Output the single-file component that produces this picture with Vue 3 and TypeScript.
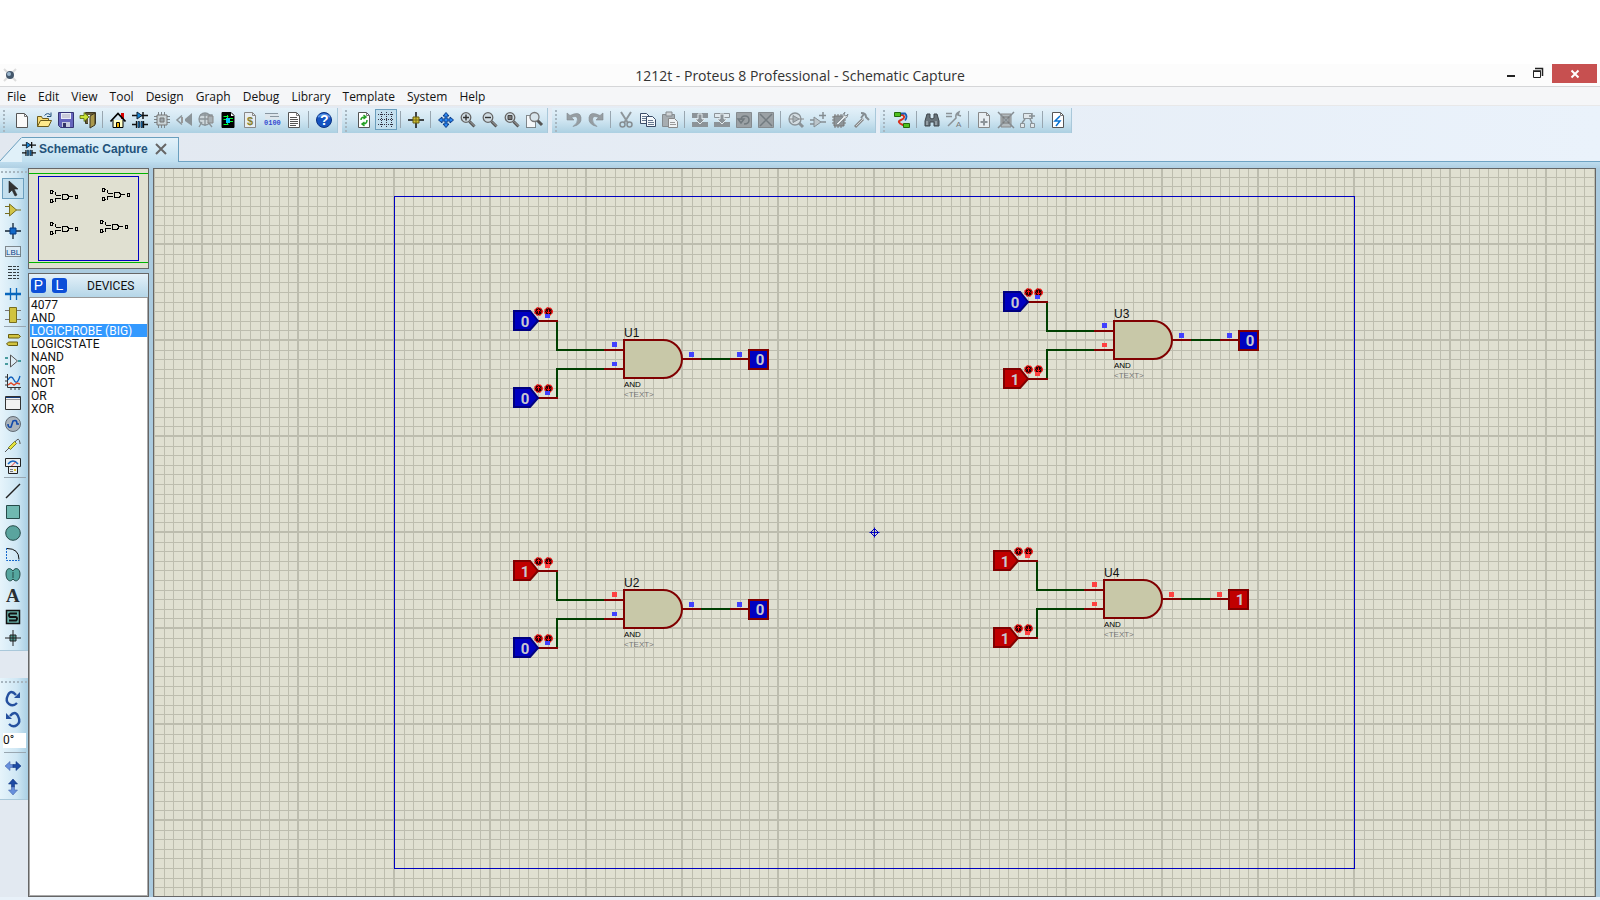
<script setup lang="ts">
import { ref } from 'vue'

type Level = 0 | 1
interface Tool { name: string; label: string; active?: boolean }
type Item = Tool | null
interface Gate { id: string; x: number; y: number; a: Level; b: Level; out: Level }

const menus = ['File', 'Edit', 'View', 'Tool', 'Design', 'Graph', 'Debug', 'Library', 'Template', 'System', 'Help']

const t = (name: string, label: string, active = false): Tool => ({ name, label, active })

const toolbars: Item[][] = [
  [t('new', 'New project'), t('open', 'Open project'), t('save', 'Save project'), t('exit', 'Close project'), null,
    t('home', 'Home page'), t('schematic', 'Schematic capture'), t('chip', 'PCB layout'), t('viewer', '3D visualizer'),
    t('gerber', 'Gerber viewer'), t('explorer', 'Design explorer'), t('bom', 'Bill of materials'), t('code', 'Source code'),
    t('notes', 'Project notes'), null, t('help', 'Help')],
  [t('refresh', 'Redraw display'), t('grid', 'Toggle grid', true), null, t('origin', 'Toggle false origin'), null,
    t('pan', 'Center at cursor'), t('zoomIn', 'Zoom in'), t('zoomOut', 'Zoom out'), t('zoomAll', 'Zoom to view entire sheet'), t('zoomArea', 'Zoom to area')],
  [t('undo', 'Undo'), t('redo', 'Redo'), null, t('cut', 'Cut'), t('copy', 'Copy'), t('paste', 'Paste'), null,
    t('blockCopy', 'Block copy'), t('blockMove', 'Block move'), t('blockRotate', 'Block rotate'), t('blockDelete', 'Block delete'), null,
    t('pick', 'Pick parts'), t('make', 'Make device'), t('package', 'Packaging tool'), t('decompose', 'Decompose')],
  [t('wire', 'Wire autorouter'), null, t('find', 'Search and tag'), t('assign', 'Property assignment tool'), null,
    t('addSheet', 'New sheet'), t('removeSheet', 'Remove sheet'), t('exitSheet', 'Exit to parent sheet'), null, t('erc', 'Electrical rule check')],
]

const modes: Item[] = [
  t('arrow', 'Selection mode', true), t('component', 'Component mode'), t('junction', 'Junction dot mode'), t('lbl', 'Wire label mode'),
  t('script', 'Text script mode'), t('bus', 'Buses mode'), t('sub', 'Subcircuit mode'), null,
  t('terminals', 'Terminals mode'), t('pins', 'Device pins mode'), t('graph', 'Graph mode'), t('popup', 'Active popup mode'),
  t('generator', 'Generator mode'), t('probe', 'Probe mode'), t('meter', 'Instruments mode'), null,
  t('line', '2D line'), t('box', '2D box'), t('circle', '2D circle'), t('arc', '2D arc'), t('path', '2D path'),
  t('text', '2D text'), t('symbol', '2D symbol'), t('marker', '2D marker'),
]

const doc = '<path d="M2.500 .5h8l3 3v12h-11z" fill="#fff" stroke="#555"/><path d="M10.500 .5v3h3" fill="none" stroke="#777"/>'
const greyDoc = '<path d="M2.500 .5h8l3 3v12h-11z" fill="#e8eef2" stroke="#888"/><path d="M10.500 .5v3h3" fill="none" stroke="#888"/>'
const lens = '<path d="M9.500 9.500l5 5" stroke="#555" stroke-width="3"/><path d="M10 9.500l4.500 4.500" stroke="#aaa"/><circle cx="6" cy="5.500" r="4.800" fill="#cfdbe2" stroke="#666" stroke-width="1.300"/>'
const parts = '<path d="M0 3.500h16M0 12.500h5M11 12.500h5" stroke="#111" stroke-width="1.300"/><path d="M5 0v7l5-3.500z" fill="#1686d9" stroke="#123"/><path d="M11 0v7" stroke="#111" stroke-width="1.500"/><path d="M4.500 9v7M11.500 9v7" stroke="#111" stroke-width="1.300"/><path d="M6 9.500h1.500v6H6zM9 9.500h1.500v6H9z" fill="#1686d9" stroke="#123" stroke-width=".8"/>'

const icons: Record<string, string> = {
  new: '<path d="M2.500 1.500h8l3 3v11h-11z" fill="#fafafa" stroke="#555"/><path d="M10.500 1.500v3h3" fill="none" stroke="#777"/>',
  open: '<path d="M1.500 14.500v-10h4l1 2h6v3" fill="#f7dc75" stroke="#6c5b1a"/><path d="M1.500 14.500l3-6h11l-3 6z" fill="#ffea8c" stroke="#6c5b1a"/><path d="M8.500 3.500q3-3.500 6-.5M15 .5v4h-4" fill="none" stroke="#24517c"/>',
  save: '<path d="M.5.5h15v15h-13l-2-2z" fill="#6565bd" stroke="#353575"/><path d="M3 1h10v6H3z" fill="#e9edf9"/><path d="M4 3h8M4 5h8" stroke="#aab"/><path d="M4 10h8v5H4z" fill="#c8cbe0"/><path d="M5 11h3v4H5z" fill="#333366"/>',
  exit: '<path d="M5.500 .5h10v11h-3v-8h-4v8h-3z" fill="#655b35" stroke="#3a3522"/><path d="M8 3h5v9H8z" fill="#e4ecf0"/><path d="M10 4l5-3v12l-5 3z" fill="#a9984c" stroke="#3a3522"/><path d="M0 3.500h4v-3l5 4.500-5 4.500v-3H0z" fill="#c9e438" stroke="#53670d" stroke-width=".8"/>',
  home: '<path d="M11 1h3v6h-3z" fill="#d80000"/><path d="M3 8v7.500h10V8" fill="#ffffc8" stroke="#000"/><path d="M.5 9.500L8 1.500l7.500 8" fill="none" stroke="#000" stroke-width="1.800"/><path d="M6.500 10.500h3v5h-3z" fill="#f8b800" stroke="#000"/>',
  schematic: parts,
  chip: '<path d="M4.500 0v16M7.500 0v16M10.500 0v16M0 4.500h16M0 7.500h16M0 10.500h16" stroke="#7d868b"/><path d="M3 3h10v10H3z" fill="#c9d4d8" stroke="#777"/><path d="M6 6h4v4H6z" fill="#9ba5aa" stroke="#777"/>',
  viewer: '<path d="M9 7l7-6v13l-7-5z" fill="#8b9499"/><path d="M6 3.500L1 8l5 4.500" fill="none" stroke="#8a9499" stroke-width="1.500"/><path d="M6 5v6" stroke="#999" stroke-width="2"/>',
  gerber: '<circle cx="7" cy="7" r="6" fill="#cdd6da" stroke="#8b9499" stroke-width="1.300"/><path d="M1 7h13M7 1v13M2 3h12v5M4 10l-3 5M10 10l4 5" fill="none" stroke="#8b9499" stroke-width="1.300"/><path d="M10 4h5v7h-5z" fill="#a8b0b4" stroke="#888"/>',
  explorer: '<path d="M2 .5h9l3 3v12H2z" fill="#000" stroke="#000"/><path d="M11 1v3h3z" fill="#fff"/><path d="M3.500 4.500h5M3.500 7.500h3M9 9.500h4M3.500 12.500h5M10 6.500h3M7.500 3v9" stroke="#00ff30"/><path d="M6 6h4v5H6z" fill="#00c8ff"/>',
  bom: greyDoc + '<text x="5" y="13" font-size="11" font-family="Liberation Sans" font-weight="bold" fill="#88812d">$</text>',
  code: '<path d="M1 1h14v6H1z" fill="#dde6ec"/><path d="M1 1.500h13M6 4.500h9" stroke="#8896a0"/><text x="0" y="13" font-size="7" font-family="Liberation Mono" font-weight="bold" fill="#354bd0">0100</text>',
  notes: doc + '<path d="M4 5.500h7M4 7.500h8M4 9.500h8M4 11.500h8M4 13.500h6" stroke="#555"/>',
  help: '<circle cx="8" cy="8" r="7.500" fill="#1553c0" stroke="#0a3282"/><path d="M2 5q6-5 12 0" fill="none" stroke="#5a93e4" stroke-width="2"/><text x="4" y="13" font-size="14" font-family="Liberation Sans" font-weight="bold" fill="#fff">?</text>',
  refresh: doc + '<path d="M5 8q0-3 4-3M7.500 3l2.500 2-2.500 2M11 8q0 4-4 4M8.500 14L6 12l2.500-2" fill="none" stroke="#25a125" stroke-width="1.500"/>',
  grid: '<path d="M0 2.500h16M0 7.500h16M0 12.500h16M3.500 0v16M8.500 0v16M13.500 0v16" stroke="#334" stroke-dasharray="1 1"/>',
  origin: '<path d="M8 0v16M0 8h16" stroke="#111" stroke-width="1.500"/><path d="M5 5h6v6H5z" fill="#d2c235" stroke="#675d10"/><path d="M8 5v6M5 8h6" stroke="#746a14"/>',
  pan: '<path d="M8 .5l3 3.500H9v3h3V5l3.500 3-3.500 3V9H9v3h2l-3 3.500L5 12h2V9H4v2L.5 8 4 5v2h3V4H5z" fill="#2b86f0" stroke="#0b3b86"/>',
  zoomIn: lens + '<path d="M3 5.500h6M6 2.500v6" stroke="#333" stroke-width="1.400"/>',
  zoomOut: lens + '<path d="M3 5.500h6" stroke="#333" stroke-width="1.400"/>',
  zoomAll: lens + '<path d="M4 3.500h4v4H4z" fill="#777" stroke="#444"/>',
  zoomArea: '<path d="M.5 3.500h9v12h-9z" fill="#f5f8fa" stroke="#222" stroke-dasharray="1 1"/><path d="M11 8l5 5" stroke="#555" stroke-width="3"/><circle cx="8.500" cy="5" r="4.500" fill="#d8e5ec" stroke="#777" stroke-width="1.300"/>',
  undo: '<path d="M1 1v7h7L5.500 5.500Q11 3 11.500 7T7 14.500q9-2 8-9T4 3.500z" fill="#969da2" stroke="#80888d" stroke-width=".6"/>',
  redo: '<path d="M15 1v7H8l2.500-2.500Q5 3 4.500 7T9 14.500q-9-2-8-9t11-2z" fill="#969da2" stroke="#80888d" stroke-width=".6"/>',
  cut: '<path d="M3 0l7 11M13 0L6 11" stroke="#8e969b" stroke-width="2"/><circle cx="4.500" cy="12.500" r="2.500" fill="none" stroke="#858d92" stroke-width="1.500"/><circle cx="11.500" cy="12.500" r="2.500" fill="none" stroke="#858d92" stroke-width="1.500"/>',
  copy: '<path d="M.5 1.500h6l3 3v7h-9z" fill="#f4f8fb" stroke="#3a4b66"/><path d="M6.500 4.500h6l3 3v7h-9z" fill="#f4f8fb" stroke="#3a4b66"/><path d="M2 4.500h4M2 6.500h4M2 8.500h4M8 8.500h5M8 10.500h6M8 12.500h6" stroke="#667890"/>',
  paste: '<path d="M.5 2.500h12v12H.5z" fill="#a7adb1" stroke="#858b8f"/><path d="M4 0h6v4H4z" fill="#d0d4d7" stroke="#858b8f"/><path d="M6.500 6.500h6l3 3v6h-9z" fill="#eef2f5" stroke="#888"/><path d="M8 10.500h5M8 12.500h6" stroke="#999"/>',
  blockCopy: '<path d="M0 1h16v5H0zM0 10h16v5H0z" fill="#8c9398"/><path d="M6 2h4v5h3l-5 5-5-5h3z" fill="#8c9398" stroke="#e2eaee"/>',
  blockMove: '<path d="M.5 1.500h15v4H.5z" fill="#e0e9ee" stroke="#8c9398"/><path d="M0 10h16v5H0z" fill="#8c9398"/><path d="M6 2h4v5h3l-5 5-5-5h3z" fill="#8c9398" stroke="#e2eaee"/>',
  blockRotate: '<path d="M.5.5h15v15H.5z" fill="#9ba1a5" stroke="#858b8f"/><path d="M5 8q0-4 4-4t4 4-5 4M2 7h6l-3 4z" fill="none" stroke="#727a7f" stroke-width="1.500"/>',
  blockDelete: '<path d="M.5.5h15v15H.5z" fill="#9ba1a5" stroke="#858b8f"/><path d="M2 2l12 12M14 2L2 14" stroke="#737b80" stroke-width="1.500"/>',
  pick: '<path d="M11 11l4 4" stroke="#8a9297" stroke-width="3"/><circle cx="7" cy="7" r="6" fill="#d4dde2" stroke="#8a9297" stroke-width="1.300"/><path d="M5 3.500v7L11 7z" fill="#a8b0b4" stroke="#858d92"/><path d="M1 7h4M11 7h5" stroke="#888"/>',
  make: '<path d="M4 5v10l7-5z" fill="#bcc5ca" stroke="#858d92"/><path d="M0 8h4M0 12h4M11 10h5M13 0v7M9 3.500h7" stroke="#858d92" stroke-width="1.500"/>',
  package: '<path d="M0 5h14M0 8h14M0 11h14M3 2v14M6 2v14M9 2v14" stroke="#777"/><path d="M2 4h10v10H2z" fill="#8d9498" stroke="#777"/><path d="M4 12l7-7q-1-3 2-5l-1 3 2 1 2-2q0 4-4 5l-6 6z" fill="#e5ebee" stroke="#858d92"/>',
  decompose: '<path d="M1 15l8-8" stroke="#888" stroke-width="3"/><path d="M2 14l8-8" stroke="#cdd4d8"/><path d="M7 1q5 0 5 4l3 3M10 2l-3 4" stroke="#858d92" stroke-width="2" fill="none"/>',
  wire: '<path d="M7 3h2q3 3-2 5t2 5h2" fill="none" stroke="#d8321f" stroke-width="2"/><path d="M7 1.500h4q3 3 0 7" fill="none" stroke="#1c5eb4" stroke-width="1.800"/><path d="M.5.500h6v4h-6zM9.500 11.500h6v4h-6z" fill="#50c020" stroke="#236a0c"/>',
  find: '<path d="M3 2h3v4l2 1 2-1V2h3l2 7v5h-5v-4H6v4H1V9z" fill="#68737a" stroke="#3e474d"/><path d="M3 9v4M12 9v4" stroke="#bdc8ce"/>',
  assign: '<path d="M0 1.500h6M0 4.500h6M2 14l8-8q-1-4 3-6l-1 3 3 1" fill="none" stroke="#8a9297" stroke-width="1.500"/><text x="10" y="15" font-size="8" font-family="Liberation Sans" fill="#777">A</text>',
  addSheet: greyDoc + '<path d="M4.500 10h7M8 6.500v7" stroke="#8d9499" stroke-width="2"/>',
  removeSheet: '<path d="M3 2h10v13H3z" fill="#b2babe" stroke="#888"/><path d="M0 0l16 16M16 0L0 16" stroke="#858d92" stroke-width="1.500"/><path d="M5 5h6v6H5z" fill="none" stroke="#777"/>',
  exitSheet: '<path d="M3.500 1.500h8v5h-8zM.5 11.500h4v4h-4zM10.500 11.500h4v4h-4z" fill="#e0e7eb" stroke="#8a9297"/><path d="M5 7l-3 4M10 7l2 4M9 4h6M12 1v6" fill="none" stroke="#8a9297" stroke-width="1.500"/>',
  erc: doc + '<path d="M10 4L5 9h5l-4 5" fill="none" stroke="#0871d0" stroke-width="1.500"/>',
  arrow: '<path d="M4 0v12l3-3 3 6 2-1-3-6h4z" fill="#333" stroke="#222" stroke-width=".6"/>',
  component: '<path d="M0 4.500h5M0 11.500h5M11 8h5" stroke="#776e20"/><path d="M4.500 2v12l7-6z" fill="#d2c548" stroke="#776e20"/>',
  junction: '<path d="M8 0v16M0 8h16" stroke="#123" stroke-width="1.300"/><path d="M5 5h6v6H5z" fill="#1269c8" stroke="#053b83"/>',
  lbl: '<path d="M.5 2.500h15v10H.5z" fill="#dbeaf4" stroke="#222" stroke-dasharray="1 1"/><text x="1" y="11" font-size="8" font-family="Liberation Sans" fill="#08428b">LBL</text>',
  script: '<path d="M3 1.500h11M3 4.500h11M3 7.500h11M3 10.500h11M3 13.500h11" stroke="#343c40" stroke-dasharray="4 1 3 1"/>',
  bus: '<path d="M0 8h16" stroke="#0967bd" stroke-width="2.500"/><path d="M5.500 2v12M11.500 2v12" stroke="#0967bd" stroke-width="1.300"/>',
  sub: '<path d="M0 3.500h4M0 12.500h4M12 3.500h4M12 12.500h4" stroke="#777"/><path d="M4.500.5h7v15h-7z" fill="#d1c340" stroke="#776e20"/>',
  terminals: '<path d="M3.500 2.500h10l2 2-2 1.500h-10z" fill="#d1c340" stroke="#675d10"/><path d="M12.500 10h-9l-2 2 2 1.500h9z" fill="#d1c340" stroke="#675d10"/>',
  pins: '<path d="M5.500 2v12l7-6z" fill="#dcebf3" stroke="#555"/><path d="M0 5h3M0 11h3M13 8h3" stroke="#168080" stroke-width="1.500"/>',
  graph: '<path d="M2.500 0v13.500H16M0 3h3M0 7h3M0 11h3M6 13v3M10 13v3M14 13v3" fill="none" stroke="#333"/><path d="M3 6q3-6 6 0t6-4" fill="none" stroke="#1261bd" stroke-width="1.300"/><path d="M3 11l3-2 3 2 3-2 3 1" fill="none" stroke="#e04a29" stroke-width="1.500"/>',
  popup: '<path d="M.5 1.500h15v13H.5z" fill="#f2f2f2" stroke="#333"/><path d="M1 2.500h14" stroke="#143b78"/><path d="M1 4.500h14" stroke="#999"/>',
  generator: '<circle cx="8" cy="8" r="7.500" fill="#aab3bb" stroke="#626b74"/><path d="M3 8q0 4 3 3l2-6q4-2 4 3h2" fill="none" stroke="#124aab" stroke-width="1.600"/>',
  probe: '<path d="M0 15l4-4M10 5q4-6 5 1v1" fill="none" stroke="#555"/><path d="M3.500 10.500l6-6 2 2-6 6z" fill="#e4e33c" stroke="#666813" stroke-width=".8"/>',
  meter: '<path d="M.5.5h15v8H.5zM3.500 8.500h9v7h-9z" fill="#e8edef" stroke="#222"/><path d="M3 6q5-6 10 0" fill="none" stroke="#1267c2" stroke-width="1.500"/><path d="M6.500 8l4-4" stroke="#d33"/><path d="M5 11.500h3M5 13.500h3" stroke="#777"/><path d="M9 11h2v2H9z" fill="#e0c82c"/>',
  line: '<path d="M1 15L15 1" stroke="#222" stroke-width="1.500"/>',
  box: '<path d="M1.500 1.500h13v13h-13z" fill="#70b9b1" stroke="#264b49"/>',
  circle: '<circle cx="8" cy="8" r="7.300" fill="#5aa49e" stroke="#264b49"/>',
  arc: '<path d="M1.500 2v12.500h13" fill="none" stroke="#1768cb" stroke-dasharray="2 1"/><path d="M2 2.500q12 0 12 11" fill="none" stroke="#111"/>',
  path: '<path d="M8 4c2-4 7-3 7 3s-4 9-7 5c-3 4-7 1-7-5S5 0 8 4z" fill="#55a69f" stroke="#264b49"/><path d="M8 5v6" stroke="#264b49"/>',
  text: '<text x="1" y="14" font-size="19" font-family="Liberation Serif" font-weight="bold" fill="#292e32">A</text>',
  symbol: '<path d="M1.500 1.500h13v13h-13z" fill="#69b0a8" stroke="#111" stroke-width="1.500"/><path d="M12 4.500H5q-1 0-1 1.500t1 2h6q1 0 1 1.500t-1 2H4" fill="none" stroke="#111" stroke-width="2"/>',
  marker: '<path d="M8 0v16M0 8h16" stroke="#222"/><path d="M5 5h6v6H5z" fill="#50988f" stroke="#222"/><path d="M8 5v6M5 8h6" stroke="#222"/>',
  cw: '<path d="M12 12q-4 4-8 1T3 4t8 0" fill="none" stroke="#24509f" stroke-width="2.400"/><path d="M15 1v6H9z" fill="#24509f"/>',
  ccw: '<path d="M4 12q4 4 8 1t1-9-8 0" fill="none" stroke="#24509f" stroke-width="2.400"/><path d="M1 1v6h6z" fill="#24509f"/>',
  mirrorX: '<path d="M0 8l5-4.500v3h3v3H5v3z" fill="#678fdc" stroke="#4969ad" stroke-width=".6"/><path d="M16 8l-5-4.500v3H8v3h3v3z" fill="#1d4ba4" stroke="#12387f" stroke-width=".6"/>',
  mirrorY: '<path d="M8 0L3.500 5h3v3h3V5h3z" fill="#1d4ba4" stroke="#12387f" stroke-width=".6"/><path d="M8 16l-4.500-5h3V8h3v3h3z" fill="#678fdc" stroke="#4969ad" stroke-width=".6"/>',
}

const devices = ['4077', 'AND', 'LOGICPROBE (BIG)', 'LOGICSTATE', 'NAND', 'NOR', 'NOT', 'OR', 'XOR']
const selected = ref('LOGICPROBE (BIG)')
const angle = ref('0°')

const gates: Gate[] = [
  { id: 'U1', x: 470, y: 171, a: 0, b: 0, out: 0 },
  { id: 'U3', x: 960, y: 152, a: 0, b: 1, out: 0 },
  { id: 'U2', x: 470, y: 421, a: 1, b: 0, out: 0 },
  { id: 'U4', x: 950, y: 411, a: 1, b: 1, out: 1 },
]
const thumbs = [[21, 21], [73, 19], [21, 53], [71, 51]]

const fill = (v: Level) => (v ? '#c00000' : '#0000c0')
const edge = (v: Level) => (v ? '#800000' : '#000080')
const dot = (v: Level) => (v ? '#ff4040' : '#4040ff')

// Grid of ten small steps per large step; every tenth line is two pixels wide.
function gridPath(): string {
  let d = ''
  for (let i = -7; i < 400; i++) {
    const w = i % 10 === 0 ? 2 : 1
    const x = Math.round(48 + i * 9.6) - w + 1
    const y = Math.round(75 + i * 9.6) - w + 1
    if (x >= 0) d += `M${x} 0h${w}v2400h-${w}z`
    if (y >= 0) d += `M0 ${y}h4000v${w}h-4000z`
  }
  return d
}
const grid = gridPath()
</script>

<template>
  <div class="app">
    <header class="titlebar">
      <svg class="logo" width="14" height="14" viewBox="0 0 14 14" aria-hidden="true">
        <path d="M1 1l3 3M13 1l-3 3M1 13l3-3M13 13l-3-3" stroke="#ddd" stroke-width="2" />
        <circle cx="7" cy="7" r="4" fill="#44576b" /><circle cx="6" cy="6" r="2" fill="#9cb8cf" />
      </svg>
      <h1>1212t - Proteus 8 Professional - Schematic Capture</h1>
      <div class="window-buttons">
        <button aria-label="Minimize"><svg width="10" height="16"><path d="M1 12h8" stroke="#222" stroke-width="2" /></svg></button>
        <button aria-label="Restore"><svg width="12" height="16"><path d="M1.500 7.500h7v6h-7z" fill="none" stroke="#222" /><path d="M1 7h8M3 4.500h7.500V12" fill="none" stroke="#222" stroke-width="1.500" /></svg></button>
        <button class="close" aria-label="Close"><svg width="10" height="10"><path d="M1.500 1.500l7 7M8.500 1.500l-7 7" stroke="#fff" stroke-width="2" /></svg></button>
      </div>
    </header>

    <nav class="menubar" aria-label="Main menu">
      <button v-for="m in menus" :key="m">{{ m }}</button>
    </nav>

    <div class="toolbars">
      <div v-for="(bar, n) in toolbars" :key="n" class="toolbar" role="toolbar">
        <template v-for="(item, i) in bar" :key="i">
          <button v-if="item" class="tool" :class="{ active: item.active }" :aria-label="item.label">
            <svg width="16" height="16" viewBox="0 0 16 16" v-html="icons[item.name]"></svg>
          </button>
          <span v-else class="sep"></span>
        </template>
      </div>
    </div>

    <div class="tabs">
      <div class="tab">
        <svg class="slant" width="22" height="25"><path d="M0 24.500L21.500.5H22V25H0z" fill="#e0f0f9" /><path d="M0 24L21.500.5" stroke="#6a9fbe" fill="none" /></svg>
        <div class="tab-face">
          <svg width="14" height="14" viewBox="0 0 16 16" v-html="icons.schematic"></svg>
          <span>Schematic Capture</span>
          <button aria-label="Close tab"><svg width="12" height="12"><path d="M1 1l10 10M11 1L1 11" stroke="#666" stroke-width="2" /></svg></button>
        </div>
      </div>
    </div>

    <main class="workspace">
      <aside class="rail">
        <div class="modes" role="toolbar" aria-label="Modes">
          <template v-for="(item, i) in modes" :key="i">
            <button v-if="item" class="mode" :class="{ active: item.active }" :aria-label="item.label">
              <svg width="16" height="16" viewBox="0 0 16 16" v-html="icons[item.name]"></svg>
            </button>
            <span v-else class="rule"></span>
          </template>
        </div>
        <div class="modes" role="toolbar" aria-label="Orientation">
          <button class="mode" aria-label="Rotate clockwise"><svg width="16" height="16" v-html="icons.cw"></svg></button>
          <button class="mode" aria-label="Rotate anti-clockwise"><svg width="16" height="16" v-html="icons.ccw"></svg></button>
          <input v-model="angle" class="angle" aria-label="Rotation angle" />
          <span class="rule"></span>
          <button class="mode" aria-label="X-mirror"><svg width="16" height="16" v-html="icons.mirrorX"></svg></button>
          <button class="mode" aria-label="Y-mirror"><svg width="16" height="16" v-html="icons.mirrorY"></svg></button>
        </div>
      </aside>

      <section class="side">
        <div class="overview">
          <svg width="100%" height="100%" aria-label="Overview" shape-rendering="crispEdges">
            <path d="M0 4.500h119M0 93.500h119" stroke="#00b400" />
            <rect x="9.500" y="7.500" width="100" height="84" fill="none" stroke="#0000c0" />
            <g v-for="([x, y], i) in thumbs" :key="i" :transform="`translate(${x} ${y})`" fill="none" stroke="#000">
              <path d="M.5.500h2v3h-2zM.5 9.500h2v3h-2zM3 1.500h1M5.500 2v3M5.500 5.500h5M3 11.500h1M5.500 8v4M5.500 8.500h5M12.500 4.500h4l2 1v3l-2 1h-4zM19 6.500h4M25.500 5.500h2v3h-2z" />
            </g>
          </svg>
        </div>
        <div class="devices">
          <div class="devices-head">
            <button aria-label="Pick devices">P</button>
            <button aria-label="Library manager">L</button>
            <h2>DEVICES</h2>
          </div>
          <ul>
            <li v-for="d in devices" :key="d">
              <button :class="{ chosen: d === selected }" @click="selected = d">{{ d }}</button>
            </li>
          </ul>
        </div>
      </section>

      <section class="sheet" aria-label="Schematic">
        <svg width="100%" height="100%">
          <path :d="grid" fill="#bdbdae" shape-rendering="crispEdges" />
          <rect x="240.500" y="27.500" width="960" height="672" fill="none" stroke="#0000c0" />
          <g stroke="#0000c0" fill="none" transform="translate(720.5 363.5)">
            <path d="M0-5v10M-5 0h10M0-4l4 4-4 4-4-4z" />
          </g>
          <g v-for="g in gates" :key="g.id" :transform="`translate(${g.x} ${g.y})`">
            <g fill="none" stroke-width="2">
              <path d="M-67-19v29h47M-67 58v-29h47M77 19h29" stroke="#004000" />
              <path d="M-86-19h20M-86 58h20M-20 10H0M-20 29H0M58 19h19M106 19h19" stroke="#800000" />
            </g>
            <path d="M0 0h39a19 19 0 0 1 0 38H0z" fill="#c8c8a8" stroke="#800000" stroke-width="2" />
            <g v-for="(v, i) in [g.a, g.b]" :key="i" :transform="`translate(0 ${i * 77})`">
              <path d="M-110-29h16l8 10-8 9h-16z" :fill="fill(v)" :stroke="edge(v)" stroke-width="2" />
              <text class="digit" x="-99" y="-13">{{ v }}</text>
              <g v-for="k in [0, 1]" :key="k" :transform="`translate(${-85.5 + k * 10} -28.5)`">
                <circle r="3.700" fill="#200000" stroke="#ff1010" stroke-dasharray="2 1" stroke-width="1.500" />
                <path :d="k ? 'M0-2v4M-2 0l2 2 2-2' : 'M0 2v-4M-2 0l2-2 2 2'" fill="none" stroke="#ff1010" />
              </g>
              <rect x="-79" y="-26" width="5" height="4" :fill="dot(v)" />
            </g>
            <rect x="-12" y="2" width="5" height="5" :fill="dot(g.a)" />
            <rect x="-12" y="22" width="5" height="4" :fill="dot(g.b)" />
            <rect x="65" y="12" width="5" height="5" :fill="dot(g.out)" />
            <rect x="113" y="12" width="5" height="5" :fill="dot(g.out)" />
            <rect x="125" y="10" width="19" height="19" :fill="fill(g.out)" stroke="#800000" stroke-width="2" />
            <text class="digit" x="136" y="25">{{ g.out }}</text>
            <text class="ref" x="0" y="-3">{{ g.id }}</text>
            <text class="part" x="0" y="47">AND</text>
            <text class="part hint" x="0" y="57">&lt;TEXT&gt;</text>
          </g>
        </svg>
      </section>
    </main>
  </div>
</template>

<style>
body { margin: 0; background: #fff; }
</style>

<style scoped>
.app {
  display: flex;
  flex-direction: column;
  box-sizing: border-box;
  height: 100vh;
  min-height: 800px;
  padding-top: 64px;
  font: 12px/16px "Open Sans", "Noto Sans", sans-serif;
  color: #111;
  background: #fff;
}
button { margin: 0; padding: 0; border: 0; background: none; color: inherit; font: inherit; }
svg { display: block; }
h1, h2, ul { margin: 0; padding: 0; font-weight: normal; list-style: none; }

.titlebar {
  display: grid;
  grid-template-columns: 1fr auto 1fr;
  height: 22px;
  background: #fcfcfc;
  border-bottom: 1px solid #d5d6d8;
}
.logo { margin: 4px 0 0 3px; }
h1 { font-size: 14px; line-height: 23px; color: #333; }
.window-buttons { display: flex; justify-content: flex-end; align-items: flex-start; gap: 16px; padding-right: 3px; }
.window-buttons .close {
  display: flex;
  justify-content: center;
  align-items: center;
  width: 45px;
  height: 19px;
  margin-left: -8px;
  background: #c75050;
}

.menubar { display: flex; height: 18px; padding-left: 1px; background: #f5f6f8; border-bottom: 1px solid #e8e8e9; }
.menubar button { padding: 2px 6px 0; line-height: 16px; }

.toolbars { display: flex; gap: 4px; padding-top: 2px; background: linear-gradient(90deg, #e2e8f0, #eaf2fb); }
.toolbar {
  position: relative;
  display: flex;
  align-items: center;
  box-sizing: border-box;
  height: 25px;
  padding: 0 2px 2px 11px;
  border-right: 1px solid #a9c8da;
  background: linear-gradient(#e4f1f9, #cfe5f1 50%, #acd0e2);
}
.toolbar::before {
  content: "";
  position: absolute;
  left: 3px;
  top: 2px;
  bottom: 1px;
  border-left: 2px dotted #a7b6c0;
}
.tool { display: flex; justify-content: center; align-items: center; width: 22px; height: 21px; }
.tool svg, .mode svg { overflow: visible; }
.tool.active { box-sizing: border-box; border: 1px solid #6b9ebd; background: #c3dfee; }
.sep { width: 1px; height: 17px; margin: 0 4px 0 3px; box-sizing: border-box; background: #98a6b0; }

.tabs {
  display: flex;
  align-items: flex-end;
  height: 28px;
  border-bottom: 1px solid #6fa3c3;
  background: linear-gradient(90deg, #e2e8f0, #eaf2fb);
}
.tab { display: flex; height: 25px; margin-bottom: -1px; }
.tab-face {
  display: flex;
  align-items: center;
  gap: 3px;
  padding: 0 11px 2px 0;
  border-top: 1px solid #6a9fbe;
  border-right: 1px solid #6a9fbe;
  background: linear-gradient(#e3f2fa, #bfdff0);
  font: bold 12px/16px "Liberation Sans", Arial, sans-serif;
  color: #23527a;
}
.tab-face button { margin-left: 4px; }

.workspace {
  display: flex;
  flex: 1;
  min-height: 0;
  padding: 6px 4px 0 0;
  background: linear-gradient(#bddcee, #abcbdf 8px);
  border-bottom: 3px solid #e8f1f9;
}
.rail { display: flex; flex-direction: column; gap: 27px; width: 28px; background: #e2e9f1; }
.modes {
  position: relative;
  display: flex;
  flex-direction: column;
  align-items: center;
  padding: 10px 2px 2px 0;
  border-bottom: 1px solid #a9c8da;
  background: linear-gradient(90deg, #e6f4fb, #cfe7f4 60%, #a9cfe4);
}
.modes::before {
  content: "";
  position: absolute;
  left: 1px;
  right: 1px;
  top: 3px;
  border-top: 2px dotted #a7b6c0;
}
.mode { display: flex; justify-content: center; align-items: center; width: 22px; height: 21px; }
.mode.active { box-sizing: border-box; border: 1px solid #6b9ebd; background: #c3dfee; }
.rule { align-self: stretch; height: 1px; margin: 1px 0 2px 4px; background: #98a6b0; }
.angle {
  box-sizing: border-box;
  width: 23px;
  height: 15px;
  margin: 3px 0 3px 3px;
  padding: 0;
  border: 0;
  background: #fff;
  font: 12px/15px Roboto, sans-serif;
  color: #111;
}

.side { display: flex; flex-direction: column; gap: 4px; width: 121px; }
.overview { box-sizing: border-box; height: 101px; border: 1px solid #666; background: #e0e0d1; }
.devices {
  display: flex;
  flex: 1;
  flex-direction: column;
  border: 1px solid #666;
  background: #fff;
  font: 12px/14px Roboto, "Liberation Sans", sans-serif;
}
.devices-head {
  display: flex;
  align-items: center;
  gap: 6px;
  height: 23px;
  padding-left: 2px;
  border-bottom: 1px solid #999;
  background: linear-gradient(#e4f1f9, #b5d6e8);
}
.devices-head button {
  width: 15px;
  height: 15px;
  border-radius: 3px;
  background: #0c4fd8;
  color: #fff;
  font: 14px/15px "Liberation Sans", sans-serif;
}
h2 { margin-left: 14px; font-size: 12px; }
.devices ul { flex: 1; border: solid #aaa; border-width: 0 1px 1px; }
.devices li button { display: block; width: 100%; height: 13px; padding-left: 1px; text-align: left; white-space: nowrap; }
.devices li .chosen { background: #3399ff; color: #fff; }

.sheet { flex: 1; margin-left: 4px; min-width: 0; overflow: hidden; border: 1px solid #666; background: #e0e0d1; }
.sheet svg { font-family: "Liberation Sans", Arial, sans-serif; }
.digit { font-family: Roboto, sans-serif; font-size: 15px; font-weight: bold; fill: #c8c8d0; text-anchor: middle; }
.ref { font-size: 12px; fill: #111; }
.part { font-size: 8px; fill: #000; }
.hint { fill: #777; }
</style>
